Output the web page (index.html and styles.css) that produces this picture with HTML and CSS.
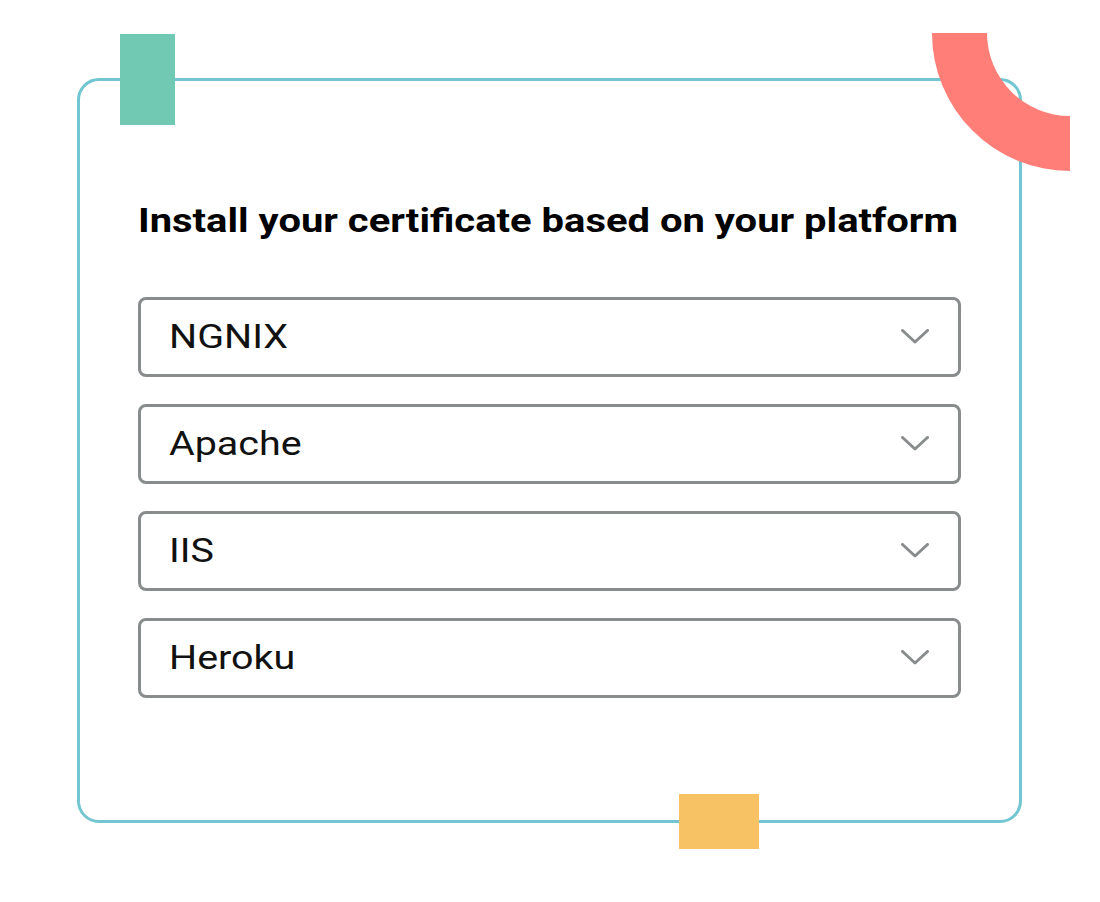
FILE: index.html
```html
<!DOCTYPE html>
<html lang="en">
<head>
	<meta charset="UTF-8">
	<title>Install your certificate</title>
	<link rel="stylesheet" href="styles.css">
</head>
<body>
	<section class="card">
		<span class="deco deco-green"></span>
		<svg class="deco deco-arc" width="138" height="138" viewBox="0 0 138 138">
			<path d="M0 0 A138 138 0 0 0 138 138 L138 83 A83 83 0 0 1 55 0 Z" fill="#ff7e77"/>
		</svg>
		<span class="deco deco-yellow"></span>

		<h2 class="title"><span class="wide">Install your certificate based on your platform</span></h2>

		<div class="platforms">
			<div class="platform">
				<span class="platform-name wide">NGNIX</span>
				<svg class="chevron" width="28" height="15" viewBox="0 0 28 15"><path d="M1.5 1.5 L14 13 L26.5 1.5"/></svg>
			</div>
			<div class="platform">
				<span class="platform-name wide">Apache</span>
				<svg class="chevron" width="28" height="15" viewBox="0 0 28 15"><path d="M1.5 1.5 L14 13 L26.5 1.5"/></svg>
			</div>
			<div class="platform">
				<span class="platform-name wide">IIS</span>
				<svg class="chevron" width="28" height="15" viewBox="0 0 28 15"><path d="M1.5 1.5 L14 13 L26.5 1.5"/></svg>
			</div>
			<div class="platform">
				<span class="platform-name wide">Heroku</span>
				<svg class="chevron" width="28" height="15" viewBox="0 0 28 15"><path d="M1.5 1.5 L14 13 L26.5 1.5"/></svg>
			</div>
		</div>
	</section>
</body>
</html>
```

FILE: styles.css
```css
body{
	margin: 0;
	min-height: 902px;
	background: #fff;
	font-family: Roboto, "Liberation Sans", Arial, sans-serif;
	color: #111;
}
.card{
	position: relative;
	box-sizing: border-box;
	width: 945px;
	height: 745px;
	margin: 78px 0 79px 77px;
	padding: 119px 58px 0;
	border: 3px solid #72c6d2;
	border-radius: 22px;
}
.deco{
	position: absolute;
	display: block;
	z-index: 1;
}
.deco-green{
	left: 40px;
	top: -47px;
	width: 55px;
	height: 91px;
	background: #72c9b3;
}
.deco-arc{
	left: 852px;
	top: -48px;
}
.deco-yellow{
	left: 599px;
	top: 713px;
	width: 80px;
	height: 55px;
	background: #f7c264;
}
/* type in the mockup is drawn a little wider than Roboto */
.wide{
	display: inline-block;
	transform-origin: left center;
	transform: scaleX(1.16);
}
.title{
	margin: 0;
	font-size: 34px;
	line-height: 40px;
	font-weight: 700;
	color: #000;
	white-space: nowrap;
}
.title .wide{
	transform: scaleX(1.175);
}
.platforms{
	display: flex;
	flex-direction: column;
	gap: 27px;
	margin-top: 57px;
}
.platform{
	display: flex;
	align-items: center;
	justify-content: space-between;
	box-sizing: border-box;
	height: 80px;
	padding: 0 29px 2px 28px;
	border: 3px solid #888c8d;
	border-radius: 8px;
}
.platform-name{
	font-size: 34px;
	line-height: 40px;
	color: #111;
}
.chevron{
	fill: none;
	stroke: #888c8d;
	stroke-width: 3;
	stroke-linecap: round;
	stroke-linejoin: round;
}
```
